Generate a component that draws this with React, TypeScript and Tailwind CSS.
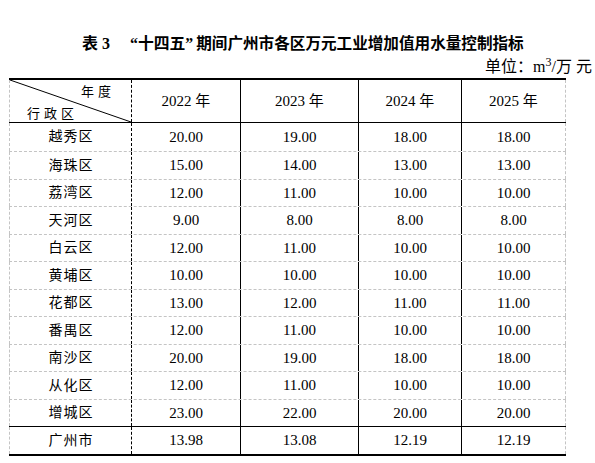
import React from "react";

const rows: { name: string; v: string[]; h: string }[] = [
  { name: "越秀区", v: ["20.00", "19.00", "18.00", "18.00"], h: "h-[29px]" },
  { name: "海珠区", v: ["15.00", "14.00", "13.00", "13.00"], h: "h-[28px]" },
  { name: "荔湾区", v: ["12.00", "11.00", "10.00", "10.00"], h: "h-[27px]" },
  { name: "天河区", v: ["9.00", "8.00", "8.00", "8.00"], h: "h-[28px]" },
  { name: "白云区", v: ["12.00", "11.00", "10.00", "10.00"], h: "h-[27px]" },
  { name: "黄埔区", v: ["10.00", "10.00", "10.00", "10.00"], h: "h-[28px]" },
  { name: "花都区", v: ["13.00", "12.00", "11.00", "11.00"], h: "h-[27px]" },
  { name: "番禺区", v: ["12.00", "11.00", "10.00", "10.00"], h: "h-[28px]" },
  { name: "南沙区", v: ["20.00", "19.00", "18.00", "18.00"], h: "h-[27px]" },
  { name: "从化区", v: ["12.00", "11.00", "10.00", "10.00"], h: "h-[28px]" },
  { name: "增城区", v: ["23.00", "22.00", "20.00", "20.00"], h: "h-[27px]" },
];

const total = { name: "广州市", v: ["13.98", "13.08", "12.19", "12.19"] };

const grid = "grid grid-cols-[123px_109px_118px_103px_104px]";
const firstCell =
  "border-l border-dashed border-l-[#c4c4c4] border-r border-r-black flex items-center justify-center";
const midCell = "border-r border-black flex items-center justify-center";
const lastCell = "border-r border-dashed border-r-[#c4c4c4] flex items-center justify-center";

function Row({
  name,
  v,
  h,
  bottom,
}: {
  name: string;
  v: string[];
  h: string;
  bottom: string;
}) {
  return (
    <div className={`${grid} ${h} ${bottom}`}>
      <div className={firstCell}>
        <span className="text-[14px] tracking-[1px] leading-none pl-[1px]">{name}</span>
      </div>
      {v.map((x, i) => (
        <div key={i} className={i === 3 ? lastCell : midCell}>
          <span className="text-[15px] leading-none">{x}</span>
        </div>
      ))}
    </div>
  );
}

export default function App() {
  return (
    <div className="w-[595px] h-[463px] bg-white text-black font-['Liberation_Serif','Noto_Sans_CJK_SC',serif] overflow-hidden">
      <div className="pt-[35px] h-[53px] pl-[82px] leading-[18px] font-bold whitespace-nowrap">
        <span className="text-[16px]">表</span>
        <span className="text-[16px] ml-[4px]">3</span>
        <span className="text-[15.8px] ml-[20px]">“十四五”</span>
        <span className="text-[15.6px] ml-[3px]">期间广州市各区万元工业增加值用水量控制指标</span>
      </div>
      <div className="h-[25px] leading-[22px] pt-[3px] text-right pr-[3px] text-[16px] whitespace-nowrap">
        单位：m<sup>3</sup>/万 元
      </div>
      <div className="ml-[9px] w-[557px] border-t-2 border-black">
        <div className={`${grid} h-[43px] border-b border-black`}>
          <div className="relative border-l border-dashed border-l-[#c4c4c4] border-r border-r-black pt-[5px]">
            <svg className="absolute inset-0 w-full h-full" preserveAspectRatio="none" viewBox="0 0 100 100">
              <line x1="0" y1="0" x2="100" y2="100" stroke="black" strokeWidth="1" vectorEffect="non-scaling-stroke" />
            </svg>
            <div className="h-[14px] leading-[14px] text-[13px] tracking-[4px] text-right pr-[16px]">年度</div>
            <div className="mt-[8px] h-[14px] leading-[14px] text-[13px] tracking-[4px] pl-[17px]">行政区</div>
          </div>
          {["2022", "2023", "2024", "2025"].map((y, i) => (
            <div key={y} className={i === 3 ? lastCell : midCell}>
              <span className="text-[15px] leading-none">
                {y} 年
              </span>
            </div>
          ))}
        </div>
        {rows.map((r, i) => (
          <Row
            key={r.name}
            name={r.name}
            v={r.v}
            h={r.h}
            bottom={i === rows.length - 1 ? "border-b border-black" : "border-b border-dashed border-[#c4c4c4]"}
          />
        ))}
        <Row name={total.name} v={total.v} h="h-[29px]" bottom="border-b-2 border-black" />
      </div>
    </div>
  );
}
